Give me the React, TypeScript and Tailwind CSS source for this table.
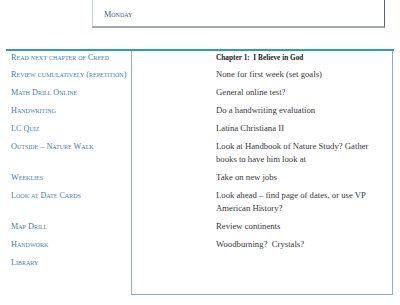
const rows: { left: string; right: string; bold?: boolean; first?: boolean }[] = [
  { left: "Read next chapter of Creed", right: "Chapter 1:  I Believe in God", bold: true, first: true },
  { left: "Review cumulatively (repetition)", right: "None for first week (set goals)" },
  { left: "Math Drill Online", right: "General online test?" },
  { left: "Handwriting", right: "Do a handwriting evaluation" },
  { left: "LC Quiz", right: "Latina Christiana II" },
  { left: "Outside – Nature Walk", right: "Look at Handbook of Nature Study? Gather books to have him look at" },
  { left: "Weeklies", right: "Take on new jobs" },
  { left: "Look at Date Cards", right: "Look ahead – find page of dates, or use VP American History?" },
  { left: "Map Drill", right: "Review continents" },
  { left: "Handwork", right: "Woodburning?  Crystals?" },
  { left: "Library", right: "" },
];

export default function App() {
  return (
    <div
      className="w-[400px] h-[305px] bg-white overflow-hidden"
      style={{ fontFamily: '"Liberation Serif", "Times New Roman", serif' }}
    >
      {/* Day header */}
      <div className="ml-[92px] w-[293px] h-[28px] border-l border-l-[#c4ccda] border-r border-r-[#56627e] border-b-2 border-b-[#a3a8b0] pl-[11px] pt-[8px] text-[8.2px] leading-[13px] [font-variant:small-caps] text-[#4b5a80]">
        Monday
      </div>

      {/* Plan table */}
      <div className="mt-[21px] ml-[6px] w-[388px] border-t-2 border-t-[#2b9db5]">
        {rows.map((r) => (
          <div key={r.left} className="flex">
            <div
              className={`w-[125px] pl-[5px] text-[8.2px] leading-[13px] [font-variant:small-caps] text-[#3f80aa] whitespace-nowrap ${
                r.first ? "pb-[4px]" : "pb-[5px]"
              }`}
            >
              {r.left}
            </div>
            <div
              className={`w-[262px] border-x border-x-[#8fb0ba] pl-[84px] pr-[12px] leading-[13px] ${
                r.first ? "pb-[4px]" : "pb-[5px]"
              } ${
                r.bold ? "text-[7.3px] font-bold text-[#222] whitespace-pre" : "text-[8.7px] text-[#383840] whitespace-pre-wrap"
              }`}
            >
              {r.right}
            </div>
          </div>
        ))}
        <div className="flex">
          <div className="w-[125px]" />
          <div className="w-[262px] h-[21px] border-x border-b border-[#8fb0ba]" />
        </div>
      </div>
    </div>
  );
}
